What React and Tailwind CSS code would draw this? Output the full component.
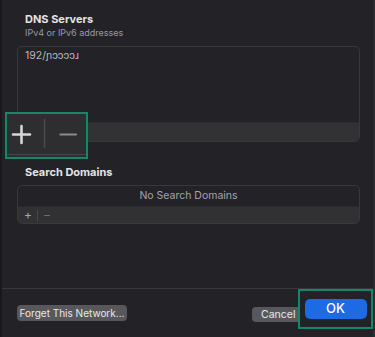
import React from "react";

export default function App() {
  const font = { fontFamily: "Inter, 'Noto Sans', 'Liberation Sans', sans-serif" };
  return (
    <div
      className="relative w-[375px] h-[337px] overflow-hidden bg-[#232227] border-l-2 border-l-[#19191b] border-r-2 border-r-[#2c2c30]"
      style={font}
    >
      <div className="flex flex-col pl-[15px] pr-[13px]">
        {/* DNS Servers */}
        <div className="pl-[8px] pt-[13px]">
          <div className="text-[11px] leading-[13px] font-bold text-[#e4e4e6]">DNS Servers</div>
          <div className="text-[9px] leading-[11px] text-[#9a9a9f] mt-[1px]">IPv4 or IPv6 addresses</div>
        </div>
        <div className="mt-[8px] h-[96px] rounded-[5px] border border-[#38383c] flex flex-col overflow-hidden">
          <div className="flex-1 pl-[7px] pt-[2px] text-[10.5px] leading-[14px] text-[#b8b8bc]">192/ɲɔɔɔɔɹ</div>
          <div className="h-[19px] bg-[#323235] border-t border-[#2b2b2e]"></div>
        </div>

        {/* Search Domains */}
        <div className="pl-[8px] mt-[24px]">
          <div className="text-[11px] leading-[13px] font-bold text-[#e4e4e6]">Search Domains</div>
        </div>
        <div className="mt-[6px] h-[39px] rounded-[5px] border border-[#38383c] flex flex-col overflow-hidden">
          <div className="h-[20px] flex items-center justify-center text-[10.5px] text-[#a4a4a9]">No Search Domains</div>
          <div className="flex-1 bg-[#313134] border-t border-[#2a2a2d] flex items-center pl-[1px] text-[#a8a8ac]">
            <span className="w-[18px] text-center text-[12px] leading-none">+</span>
            <span className="w-px h-[11px] bg-[#48484c]"></span>
            <span className="w-[18px] text-center text-[12px] leading-none text-[#6e6e72]">−</span>
          </div>
        </div>
      </div>

      {/* separator */}
      <div className="absolute left-0 right-0 top-[288px] h-px bg-[#38383b]"></div>

      {/* bottom buttons */}
      <div className="absolute left-[15px] top-[305px] h-[16px] w-[110px] rounded-[4px] bg-[#58585c] flex items-center justify-center text-[10px] text-[#e8e8ea]">
        Forget This Network...
      </div>
      <div className="absolute left-[250px] top-[307px] h-[15px] w-[56px] rounded-[4px] bg-[#58585c] flex items-center pl-[9px] text-[10.5px] text-[#e8e8ea]">
        Cancel
      </div>

      {/* Highlighted OK callout */}
      <div className="absolute left-[296px] top-[289px] w-[75px] h-[40px] border-2 border-[#14866a] bg-[#232227] flex items-center justify-center">
        <div className="w-[62px] h-[20px] rounded-[5px] bg-[#1c6ae4] flex items-center justify-center text-[13px] font-medium text-white">
          OK
        </div>
      </div>

      {/* Highlighted +/- callout */}
      <div className="absolute left-[3px] top-[112px] w-[83px] h-[47px] border-2 border-[#14866a] bg-[#2e2e31]">
        <svg width="79" height="43" viewBox="0 0 79 43" className="block">
          <path d="M6 20.5 H23 M14.5 12 V29" stroke="#d6d6d8" strokeWidth="2.6" strokeLinecap="round" />
          <path d="M37.5 5 V34" stroke="#4c4c50" strokeWidth="1.5" />
          <path d="M53.5 20.5 H69" stroke="#8a8a8e" strokeWidth="2.2" strokeLinecap="round" />
          <path d="M0 40.5 H79" stroke="#47474b" strokeWidth="1" />
        </svg>
      </div>
    </div>
  );
}
